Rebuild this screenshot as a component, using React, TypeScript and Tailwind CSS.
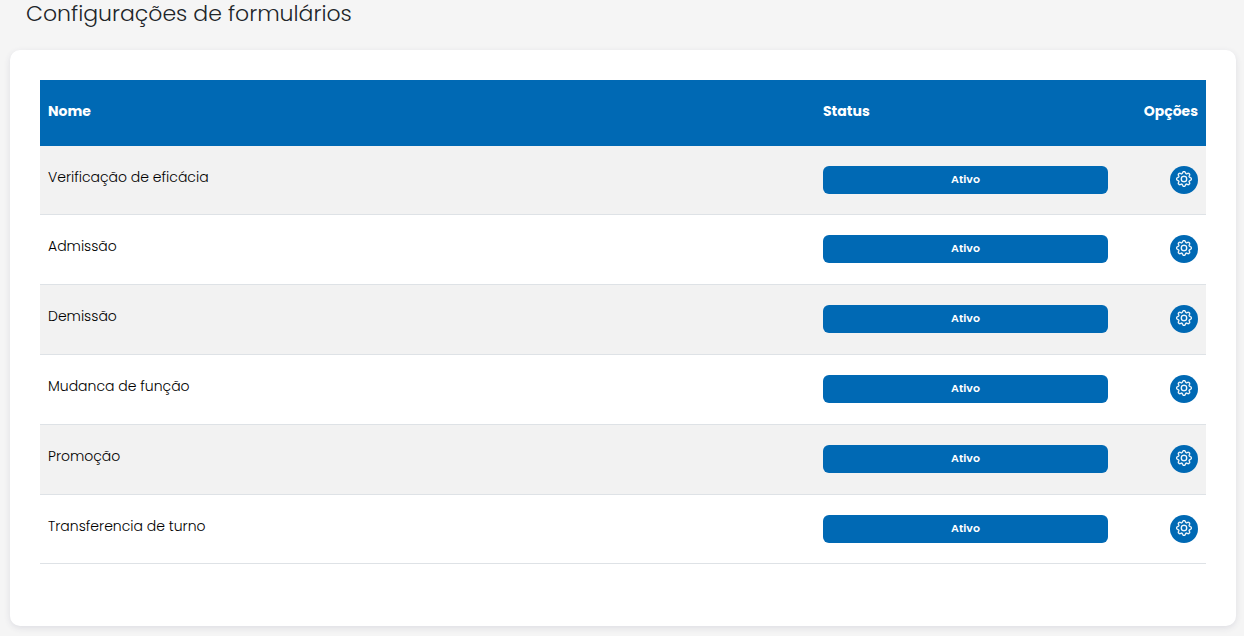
import { BsGear } from "react-icons/bs";

const forms = [
  { name: "Verificação de eficácia", status: "Ativo" },
  { name: "Admissão", status: "Ativo" },
  { name: "Demissão", status: "Ativo" },
  { name: "Mudanca de função", status: "Ativo" },
  { name: "Promoção", status: "Ativo" },
  { name: "Transferencia de turno", status: "Ativo" },
];

export default function App() {
  return (
    <div className="min-h-screen bg-[#f5f5f5] pr-2 pb-2.5 pl-2.5 font-[Poppins,Inter,sans-serif] text-[#212529]">
      <h1 className="px-4 pb-[22px] text-[22px] leading-7 font-light">Configurações de formulários</h1>
      <main className="rounded-[10px] bg-white px-[30px] pt-[30px] pb-[62px] shadow-[0_2px_6px_rgba(60,60,100,0.12)]">
        <table className="w-full table-fixed border-separate border-spacing-0 text-left">
          <colgroup>
            <col />
            <col className="w-[301px]" />
            <col className="w-[90px]" />
          </colgroup>
          <thead className="bg-[#0069b4] text-sm text-white">
            <tr className="h-[66px]">
              <th scope="col" className="px-2 pb-1 font-bold">Nome</th>
              <th scope="col" className="px-2 pb-1 font-bold">Status</th>
              <th scope="col" className="px-2 pb-1 text-right font-bold">Opções</th>
            </tr>
          </thead>
          <tbody>
            {forms.map((form) => (
              <tr key={form.name} className="h-[70px] align-top first:h-[69px] last:h-[69px] odd:bg-[#f2f2f2]">
                <td className="border-b border-[#dee2e6] px-2 pt-5 text-sm leading-[22px] font-light text-black">{form.name}</td>
                <td className="border-b border-[#dee2e6] px-2 pt-5">
                  <button type="button" className="block h-7 w-full rounded-[6px] bg-[#0069b4] pb-0.5 text-[11px] font-semibold text-white">
                    {form.status}
                  </button>
                </td>
                <td className="border-b border-[#dee2e6] px-2 pt-5">
                  <button
                    type="button"
                    aria-label={`Configurar ${form.name}`}
                    className="ml-auto flex size-7 items-center justify-center rounded-full bg-[#0069b4] pb-0.5 text-white"
                  >
                    <BsGear className="size-4 stroke-[0.3]" />
                  </button>
                </td>
              </tr>
            ))}
          </tbody>
        </table>
      </main>
    </div>
  );
}
